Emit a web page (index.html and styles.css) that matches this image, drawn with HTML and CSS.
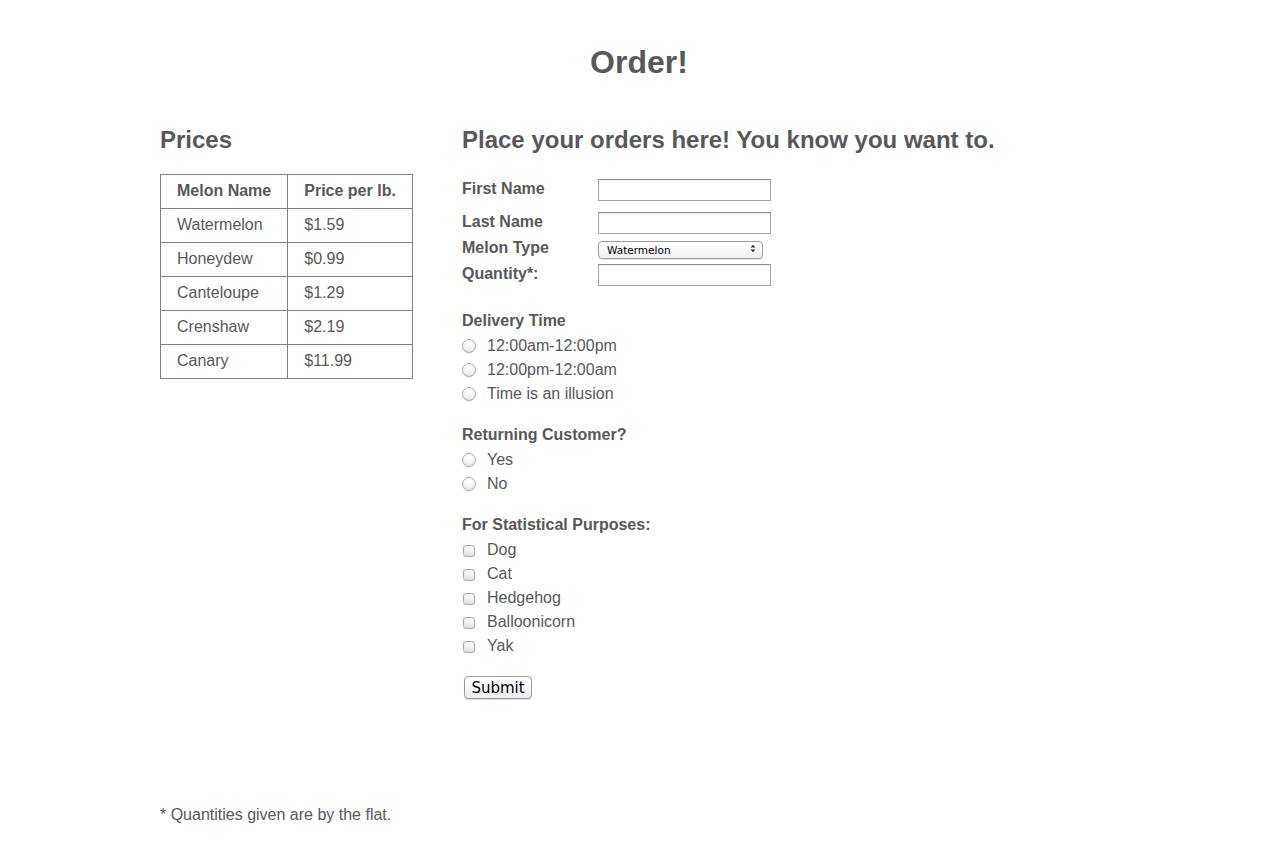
FILE: index.html
```html
<!DOCTYPE html>
<html>
<head>
<meta charset="utf-8">
<title>Order!</title>
<link rel="stylesheet" href="styles.css">
</head>
<body>
<div class="page">
  <h1 class="title">Order!</h1>
  <div class="columns">
    <section class="prices">
      <h2 class="heading">Prices</h2>
      <table class="price-table">
        <tr><th>Melon Name</th><th>Price per lb.</th></tr>
        <tr><td>Watermelon</td><td>$1.59</td></tr>
        <tr><td>Honeydew</td><td>$0.99</td></tr>
        <tr><td>Canteloupe</td><td>$1.29</td></tr>
        <tr><td>Crenshaw</td><td>$2.19</td></tr>
        <tr><td>Canary</td><td>$11.99</td></tr>
      </table>
    </section>
    <section class="order">
      <h2 class="heading">Place your orders here! You know you want to.</h2>
      <form class="order-form">
        <div class="field field-text gap-lg">
          <label class="field-label">First Name</label>
          <input class="text-input" type="text">
        </div>
        <div class="field field-text gap-sm">
          <label class="field-label">Last Name</label>
          <input class="text-input" type="text">
        </div>
        <div class="field field-select gap-sm">
          <label class="field-label">Melon Type</label>
          <span class="select-wrap">
            <select class="select-input">
              <option>Watermelon</option>
              <option>Honeydew</option>
              <option>Canteloupe</option>
              <option>Crenshaw</option>
              <option>Canary</option>
            </select>
            <svg class="select-arrows" width="6" height="9" viewBox="0 0 6 9"><path d="M0.5 3.5 L3 0.8 L5.5 3.5 Z M0.5 5.5 L3 8.2 L5.5 5.5 Z" fill="#333"/></svg>
          </span>
        </div>
        <div class="field field-text">
          <label class="field-label">Quantity*:</label>
          <input class="text-input" type="text">
        </div>

        <div class="group group-first">
          <div class="group-title">Delivery Time</div>
          <label class="option"><input class="radio" type="radio" name="time">12:00am-12:00pm</label>
          <label class="option"><input class="radio" type="radio" name="time">12:00pm-12:00am</label>
          <label class="option"><input class="radio" type="radio" name="time">Time is an illusion</label>
        </div>

        <div class="group group-second">
          <div class="group-title">Returning Customer?</div>
          <label class="option"><input class="radio" type="radio" name="ret">Yes</label>
          <label class="option"><input class="radio" type="radio" name="ret">No</label>
        </div>

        <div class="group group-third">
          <div class="group-title">For Statistical Purposes:</div>
          <label class="option"><input class="check" type="checkbox">Dog</label>
          <label class="option"><input class="check" type="checkbox">Cat</label>
          <label class="option"><input class="check" type="checkbox">Hedgehog</label>
          <label class="option"><input class="check" type="checkbox">Balloonicorn</label>
          <label class="option"><input class="check" type="checkbox">Yak</label>
        </div>

        <button class="submit" type="submit">Submit</button>
      </form>
    </section>
  </div>
  <p class="footnote">* Quantities given are by the flat.</p>
</div>
</body>
</html>
```
FILE: styles.css
```css
html, body {
  margin: 0;
  padding: 0;
  background: #fff;
}
body {
  font-family: "Liberation Sans", Arial, Helvetica, sans-serif;
  color: #585858;
  font-size: 16px;
}
.page {
  width: 958px;
  margin: 0 auto;
  padding-top: 44px;
}
.title {
  margin: 0;
  text-align: center;
  font-size: 32px;
  line-height: 36px;
  font-weight: bold;
}
.columns {
  display: flex;
  margin-top: 46px;
}
.prices {
  width: 302px;
  flex: none;
}
.order {
  flex: 1;
}
.heading {
  margin: 0;
  font-size: 24px;
  line-height: 28px;
  font-weight: bold;
}
.price-table {
  margin-top: 20px;
  border-collapse: collapse;
  border: 1px solid #808080;
}
.price-table th,
.price-table td {
  border: 1px solid #808080;
  height: 34px;
  padding: 0 16px 2px 16px;
  text-align: left;
  font-size: 16px;
  line-height: 18px;
  white-space: nowrap;
  box-sizing: border-box;
}
.price-table th {
  font-weight: bold;
}
.price-table th:first-child,
.price-table td:first-child {
  width: 127px;
}
.price-table th:last-child,
.price-table td:last-child {
  width: 122px;
}
.order-form {
  margin-top: 25px;
}
.field {
  display: flex;
  align-items: center;
}
.field-text { height: 22px; }
.field-select { height: 18px; }
.gap-lg { margin-bottom: 11px; }
.gap-sm { margin-bottom: 6px; }
.field-label {
  width: 136px;
  flex: none;
  font-weight: bold;
  font-size: 16px;
  line-height: 18px;
  padding-bottom: 2px;
}
.text-input {
  width: 173px;
  height: 22px;
  box-sizing: border-box;
  border: 1px solid #a6a6a6;
  border-top-color: #8e8e8e;
  margin: 0;
  padding: 2px 4px;
  font-size: 13px;
  background: #fff;
  box-shadow: inset 0 1px 1px rgba(0,0,0,0.08);
}
.select-wrap {
  position: relative;
  display: inline-block;
  width: 165px;
  height: 18px;
}
.select-input {
  -webkit-appearance: none;
  appearance: none;
  width: 165px;
  height: 18px;
  box-sizing: border-box;
  border: 1px solid #9c9c9c;
  border-radius: 4px;
  background: linear-gradient(#ffffff, #f1f1f1);
  font-family: "DejaVu Sans", "Liberation Sans", sans-serif;
  font-size: 10.5px;
  color: #000;
  padding: 0 0 0 8px;
  margin: 0;
  box-shadow: 0 1px 1px rgba(0,0,0,0.12);
}
.select-arrows {
  position: absolute;
  right: 7px;
  top: 4px;
  pointer-events: none;
}
.group-first {
  margin-top: 22px;
}
.group-second {
  margin-top: 16px;
}
.group-third {
  margin-top: 16px;
}
.group-title {
  font-weight: bold;
  font-size: 16px;
  line-height: 26px;
}
.option {
  display: flex;
  align-items: center;
  height: 24px;
  font-size: 16px;
}
.radio {
  -webkit-appearance: none;
  appearance: none;
  width: 14px;
  height: 14px;
  margin: 0 11px 0 0;
  border: 1px solid #a8a8a8;
  border-radius: 50%;
  background: radial-gradient(circle at 50% 30%, #ffffff 0%, #f4f4f4 50%, #dcdcdc 100%);
  box-shadow: inset 0 1px 1px rgba(255,255,255,0.9), 0 1px 0 rgba(0,0,0,0.05);
  box-sizing: border-box;
  flex: none;
}
.check {
  -webkit-appearance: none;
  appearance: none;
  width: 12px;
  height: 12px;
  margin: 2px 12px 0 1px;
  border: 1px solid #a8a8a8;
  border-radius: 3px;
  background: linear-gradient(#ffffff, #e2e2e2);
  box-sizing: border-box;
  flex: none;
}
.submit {
  display: block;
  margin: 18px 0 0 2px;
  width: 68px;
  height: 23px;
  padding: 0;
  border: 1px solid #9a9a9a;
  border-radius: 4px;
  background: linear-gradient(#ffffff, #ececec);
  font-family: "DejaVu Sans", "Liberation Sans", sans-serif;
  font-size: 15px;
  color: #000;
  box-shadow: 0 1px 1px rgba(0,0,0,0.15);
}
.footnote {
  margin: 106px 0 0 0;
  font-size: 16px;
  line-height: 20px;
}
```
